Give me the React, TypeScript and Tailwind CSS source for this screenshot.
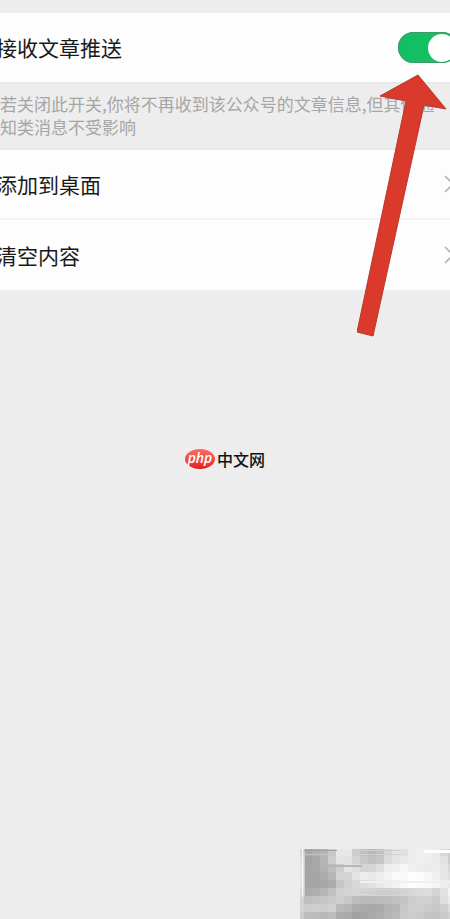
import { useState } from "react";

// grey levels of the thumbnail, 8px cells
const MOSAIC: number[][] = [
  [215, 168, 175, 182, 200, 232, 232, 205, 192, 185, 192, 215, 228, 225, 236, 240, 240, 235, 215, 205],
  [225, 162, 168, 180, 205, 228, 226, 212, 200, 192, 198, 218, 228, 232, 236, 240, 238, 234, 225, 205],
  [228, 165, 168, 178, 190, 205, 228, 222, 212, 214, 222, 238, 240, 246, 240, 236, 234, 236, 230, 215],
  [228, 164, 165, 172, 182, 212, 212, 228, 236, 232, 238, 244, 250, 248, 253, 252, 246, 240, 230, 222],
  [226, 164, 164, 166, 172, 198, 208, 215, 220, 226, 232, 238, 243, 248, 253, 252, 248, 244, 238, 232],
  [218, 170, 175, 182, 192, 208, 212, 214, 214, 210, 206, 206, 208, 212, 215, 218, 220, 212, 226, 244],
  [210, 190, 195, 198, 202, 206, 200, 190, 186, 186, 188, 190, 192, 196, 205, 208, 208, 204, 222, 234],
  [212, 205, 206, 205, 208, 186, 182, 172, 170, 168, 170, 178, 182, 200, 206, 206, 204, 200, 206, 220],
  [205, 190, 188, 184, 190, 172, 170, 162, 164, 170, 174, 180, 186, 202, 205, 202, 196, 194, 202, 208],
];

// thin strips over the cells: x, y, width, height, grey
const STRIPS: number[][] = [
  [2, 0, 1, 48, 245],
  [4, 0, 1, 48, 205],
  [4, 1, 33, 1, 160],
  [4, 5, 31, 1, 195],
  [22, 16, 40, 2, 182],
  [60, 1, 40, 1, 205],
  [60, 5, 40, 1, 208],
  [124, 1, 26, 3, 253],
  [60, 32, 90, 2, 240],
  [60, 40, 50, 1, 212],
  [60, 43, 50, 1, 205],
  [60, 46, 50, 1, 212],
  [152, 40, 2, 8, 235],
];

const Mosaic: React.FC = () => (
  <svg
    viewBox="0 0 150 70"
    className="h-[70px] w-[150px]"
    shapeRendering="crispEdges"
    aria-hidden="true"
  >
    {MOSAIC.map((row, y) =>
      row.map((v, x) => (
        <rect
          key={`${y}-${x}`}
          x={x * 8 - 4}
          y={y * 8 - 1}
          width={8}
          height={8}
          fill={`rgb(${v},${v},${v})`}
        />
      )),
    )}
    {STRIPS.map(([x, y, w, h, v]) => (
      <rect
        key={`s${x}-${y}`}
        x={x}
        y={y}
        width={w}
        height={h}
        fill={`rgb(${v},${v},${v})`}
      />
    ))}
  </svg>
);

const Chevron: React.FC = () => (
  <svg
    viewBox="0 0 10 18"
    className="-mr-1 h-[18px] w-[10px] shrink-0"
    aria-hidden="true"
  >
    <path d="M1 1l8 8-8 8" fill="none" stroke="#b4b4b4" strokeWidth="1.6" />
  </svg>
);

const Arrow: React.FC = () => (
  <svg
    viewBox="0 0 93 264"
    className="pointer-events-none absolute top-[74px] right-0 h-[264px] w-[93px]"
    aria-hidden="true"
  >
    <path
      d="M61 1L89 35L67 31L16 262L0 258L49 27L23 22Z"
      fill="#d93a2b"
      stroke="#b8382c"
      strokeWidth="1"
    />
  </svg>
);

const Logo: React.FC = () => (
  <div className="pointer-events-none absolute inset-0 flex items-center justify-center gap-0.5 pb-0.5">
    <span className="flex h-5 w-[30px] items-center justify-center rounded-[50%] bg-linear-to-b from-[#ff6b63] to-[#e0181c] pb-0.5 font-['Open_Sans',sans-serif] text-[14px] leading-4 font-semibold text-white italic">
      php
    </span>
    <span className="text-[16px] leading-5 font-medium text-[#111]">
      中文网
    </span>
  </div>
);

const App: React.FC = () => {
  const [enabled, setEnabled] = useState(true);

  return (
    <main className="relative flex min-h-screen flex-col overflow-hidden bg-[#ededed] pt-[13px] font-['Noto_Sans_CJK_SC',sans-serif] text-[21px] leading-8 text-[#191919]">
      <label className="flex h-[69px] items-center justify-between bg-[#fdfdfd]">
        <span className="-ml-1 pb-0.5">接收文章推送</span>
        <span className="relative -mr-2 flex h-[31px] w-[60px] items-center justify-end rounded-full bg-[#13bf63] p-0.5 shadow-[inset_0_0_0_1px_#3f9a66]">
          <input
            type="checkbox"
            role="switch"
            checked={enabled}
            onChange={() => setEnabled(!enabled)}
            className="absolute inset-0 appearance-none"
          />
          <span className="size-7 rounded-full bg-white" />
        </span>
      </label>
      <p className="h-[68px] border-y-2 border-[#e8e8e8] pt-2 text-[17px] leading-[23px] whitespace-nowrap text-[#a6a6a6]">
        若关闭此开关,你将不再收到该公众号的文章信息,但其他通
        <br />
        知类消息不受影响
      </p>
      <button className="flex h-[70px] items-center justify-between border-b-2 border-[#f4f4f4] bg-[#fdfdfd]">
        <span className="-ml-1">添加到桌面</span>
        <Chevron />
      </button>
      <button className="flex h-[70px] items-center justify-between bg-[#fdfdfd]">
        <span className="-ml-1">清空内容</span>
        <Chevron />
      </button>
      <div className="mt-auto self-end">
        <Mosaic />
      </div>
      <Arrow />
      <Logo />
    </main>
  );
};

export default App;
